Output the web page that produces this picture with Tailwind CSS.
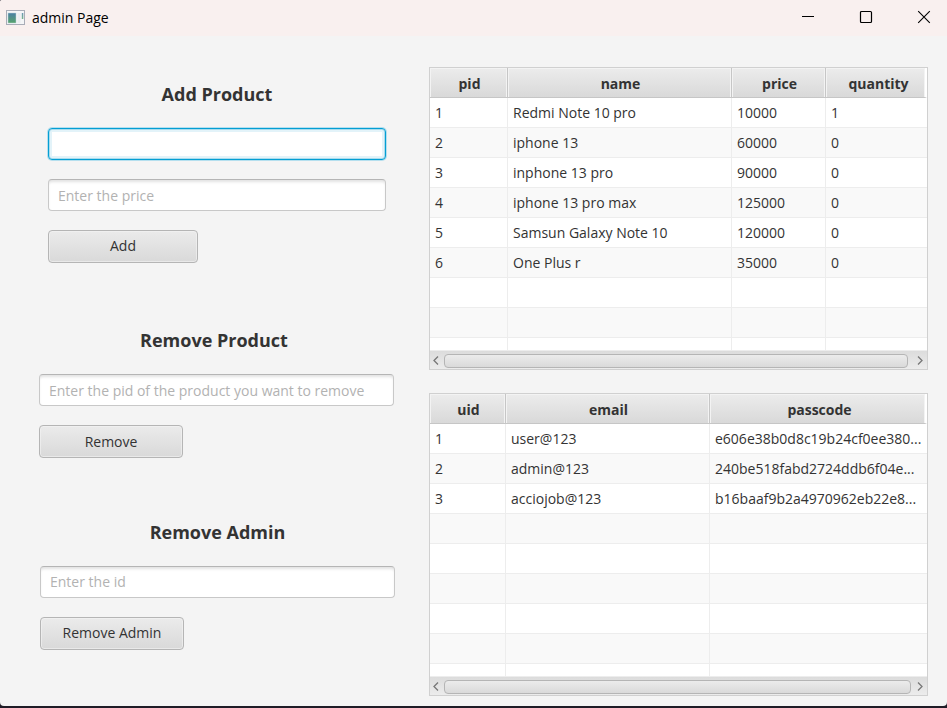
<!DOCTYPE html>
<html lang="en">
<head>
<meta charset="utf-8">
<meta name="viewport" content="width=device-width, initial-scale=1">
<title>admin Page</title>
<script src="https://cdn.jsdelivr.net/npm/@tailwindcss/browser@4"></script>
</head>
<body class="min-h-screen bg-[#1f1c26] pb-[2px] font-['Open_Sans','Noto_Sans',sans-serif] text-[14px] leading-5 text-[#333]">
<div class="flex min-h-[calc(100vh-2px)] flex-col overflow-hidden rounded-tl-[2px] rounded-b-sm bg-[#f4f4f4]">

  <header class="flex h-9 items-center bg-[#f9f0ef] pl-[6px] text-black">
    <svg class="-mt-[2px] h-[15px] w-[19px]" viewBox="0 0 19 15" aria-hidden="true">
      <defs><linearGradient id="app" x1="0" y1="0" x2="0" y2="1"><stop offset="0" stop-color="#4a7fa5"/><stop offset="1" stop-color="#57a36c"/></linearGradient></defs>
      <rect x=".5" y=".5" width="18" height="14" fill="#f4f5f7" stroke="#a9adb8"/>
      <rect x="2" y="3" width="8" height="10" fill="url(#app)" stroke="#b9d3d6" stroke-width=".5"/>
      <rect x="11.500" y="3" width="3" height="10" fill="#eaedf0"/>
      <rect x="15.800" y="3" width="1.500" height="6" fill="url(#app)" opacity=".8"/>
    </svg>
    <h1 class="ml-[7px] grow">admin Page</h1>
    <div class="-mt-[2px] flex h-full">
      <button aria-label="Minimize" class="flex w-[46px] items-center justify-center"><svg class="size-[14px]" viewBox="0 0 14 14"><path d="M1 6.500h12" stroke="#000" fill="none"/></svg></button>
      <button aria-label="Maximize" class="flex w-[70px] items-center justify-center"><svg class="size-[14px]" viewBox="0 0 14 14"><rect x="1.500" y="1.500" width="11" height="11" rx="1" stroke="#000" stroke-width="1.200" fill="none"/></svg></button>
      <button aria-label="Close" class="flex w-[46px] items-center justify-center"><svg class="size-[14px]" viewBox="0 0 14 14"><path d="M1.200 1.200l11.600 11.600M12.800 1.200L1.200 12.800" stroke="#000" stroke-width="1.100" fill="none"/></svg></button>
    </div>
  </header>

  <main class="grid grow grid-cols-[429fr_499fr] pr-[19px]">
    <div class="pt-[46px]">
      <form class="flex flex-col items-start pr-[43px] pl-12">
        <h2 class="mb-[22px] w-full text-center text-lg leading-6 font-bold">Add Product</h2>
        <input aria-label="Product name" class="mb-[19px] h-8 w-full rounded-[4px] border border-[#039ed3] bg-white px-[9px] shadow-[0_0_0_1px_#b5dfee,inset_0_0_0_1px_#a9dcee,inset_0_0_0_3px_#e3f3f9] outline-none">
        <input aria-label="Price" placeholder="Enter the price" class="mb-[19px] h-8 w-full rounded-[4px] border border-[#c8c8c8] border-t-[#b5b5b5] bg-white px-[9px] shadow-[inset_0_3px_3px_-1px_#e2e2e2] outline-none placeholder:text-[#b2b2b2]">
        <button type="button" class="h-[33px] w-[150px] rounded-[4px] border border-[#b5b5b5] bg-linear-to-b from-[#ebebeb] to-[#d9d9d9] pb-[2px] shadow-[inset_0_0_0_1px_#f3f3f399]">Add</button>
      </form>
      <form class="mt-[65px] flex flex-col items-start pr-[35px] pl-[39px]">
        <h2 class="mb-[22px] w-full pr-[5px] text-center text-lg leading-6 font-bold">Remove Product</h2>
        <input aria-label="Product pid" placeholder="Enter the pid of the product you want to remove" class="mb-[19px] h-8 w-full rounded-[4px] border border-[#c8c8c8] border-t-[#b5b5b5] bg-white px-[9px] shadow-[inset_0_3px_3px_-1px_#e2e2e2] outline-none placeholder:text-[#b2b2b2]">
        <button type="button" class="h-[33px] w-36 rounded-[4px] border border-[#b5b5b5] bg-linear-to-b from-[#ebebeb] to-[#d9d9d9] shadow-[inset_0_0_0_1px_#f3f3f399]">Remove</button>
      </form>
      <form class="mt-[62px] flex flex-col items-start pr-[34px] pl-10">
        <h2 class="mb-[22px] w-full text-center text-lg leading-6 font-bold">Remove Admin</h2>
        <input aria-label="Admin id" placeholder="Enter the id" class="mb-[19px] h-8 w-full rounded-[4px] border border-[#c8c8c8] border-t-[#b5b5b5] bg-white px-[9px] pb-[2px] shadow-[inset_0_3px_3px_-1px_#e2e2e2] outline-none placeholder:text-[#b2b2b2]">
        <button type="button" class="h-[33px] w-36 rounded-[4px] border border-[#b5b5b5] bg-linear-to-b from-[#ebebeb] to-[#d9d9d9] pb-[2px] shadow-[inset_0_0_0_1px_#f3f3f399]">Remove Admin</button>
      </form>
    </div>

    <div class="flex flex-col gap-[23px] pt-[31px] pb-[10px]">
      <section class="border border-[#d0d0d0] bg-white" aria-label="Products">
        <table class="w-full table-fixed border-separate border-spacing-0 text-left whitespace-nowrap [&_td]:border-r [&_td]:border-b [&_td]:border-[#ededed] [&_td]:px-[5px] [&_td:last-child]:border-r-0 [&_th]:border-r [&_th]:border-b [&_th]:border-[#c6c6c6] [&_th]:bg-linear-to-b [&_th]:from-[#ececec] [&_th]:to-[#d9d9d9] [&_th]:pt-[2px] [&_th]:pl-[2px] [&_th]:text-center [&_th]:font-bold [&_th]:shadow-[inset_1px_1px_0_#f3f3f3,inset_-1px_0_0_#f3f3f3] [&_th:last-child]:border-r-2 [&_th:last-child]:border-r-white [&_th:last-child]:pl-[6px]">
          <colgroup><col class="w-[78px]"><col><col class="w-[94px]"><col class="w-[101px]"></colgroup>
          <thead><tr class="h-[30px]"><th>pid</th><th>name</th><th>price</th><th>quantity</th></tr></thead>
          <tbody>
            <tr class="h-[30px]"><td>1</td><td>Redmi Note 10 pro</td><td>10000</td><td>1</td></tr>
            <tr class="h-[30px] bg-[#f9f9f9]"><td>2</td><td>iphone 13</td><td>60000</td><td>0</td></tr>
            <tr class="h-[30px]"><td>3</td><td>inphone 13 pro</td><td>90000</td><td>0</td></tr>
            <tr class="h-[30px] bg-[#f9f9f9]"><td>4</td><td>iphone 13 pro max</td><td>125000</td><td>0</td></tr>
            <tr class="h-[30px]"><td>5</td><td>Samsun Galaxy Note 10</td><td>120000</td><td>0</td></tr>
            <tr class="h-[30px] bg-[#f9f9f9]"><td>6</td><td>One Plus r</td><td>35000</td><td>0</td></tr>
            <tr class="h-[30px]"><td></td><td></td><td></td><td></td></tr>
            <tr class="h-[30px] bg-[#f9f9f9]"><td></td><td></td><td></td><td></td></tr>
            <tr class="h-[13px]"><td></td><td></td><td></td><td></td></tr>
          </tbody>
        </table>
        <div class="flex h-[18px] items-center bg-linear-to-b from-[#dcdcdc] to-[#ececec] pt-[2px]">
          <svg class="h-3 w-[14px]" viewBox="0 0 14 12" aria-hidden="true"><path d="M8 1.500L4 5.500l4 4" fill="none" stroke="#777" stroke-width="1.300"/></svg>
          <div class="h-[14px] grow rounded-[4px] border border-[#b5b5b5] bg-linear-to-b from-[#ececec] to-[#dadada]"></div>
          <svg class="ml-[5px] h-3 w-[14px]" viewBox="0 0 14 12" aria-hidden="true"><path d="M5 1.500l4 4-4 4" fill="none" stroke="#777" stroke-width="1.300"/></svg>
        </div>
      </section>

      <section class="border border-[#d0d0d0] bg-white" aria-label="Users">
        <table class="w-full table-fixed border-separate border-spacing-0 text-left whitespace-nowrap [&_td]:border-r [&_td]:border-b [&_td]:border-[#ededed] [&_td]:px-[5px] [&_td:last-child]:border-r-0 [&_th]:border-r [&_th]:border-b [&_th]:border-[#c6c6c6] [&_th]:bg-linear-to-b [&_th]:from-[#ececec] [&_th]:to-[#d9d9d9] [&_th]:pt-[2px] [&_th]:pl-[2px] [&_th]:text-center [&_th]:font-bold [&_th]:shadow-[inset_1px_1px_0_#f3f3f3,inset_-1px_0_0_#f3f3f3] [&_th:last-child]:border-r-2 [&_th:last-child]:border-r-white [&_th:last-child]:pl-[4px]">
          <colgroup><col class="w-[76px]"><col class="w-[204px]"><col></colgroup>
          <thead><tr class="h-[30px]"><th>uid</th><th>email</th><th>passcode</th></tr></thead>
          <tbody>
            <tr class="h-[30px]"><td>1</td><td>user@123</td><td>e606e38b0d8c19b24cf0ee380...</td></tr>
            <tr class="h-[30px] bg-[#f9f9f9]"><td>2</td><td>admin@123</td><td>240be518fabd2724ddb6f04e...</td></tr>
            <tr class="h-[30px]"><td>3</td><td>acciojob@123</td><td>b16baaf9b2a4970962eb22e8...</td></tr>
            <tr class="h-[30px] bg-[#f9f9f9]"><td></td><td></td><td></td></tr>
            <tr class="h-[30px]"><td></td><td></td><td></td></tr>
            <tr class="h-[30px] bg-[#f9f9f9]"><td></td><td></td><td></td></tr>
            <tr class="h-[30px]"><td></td><td></td><td></td></tr>
            <tr class="h-[30px] bg-[#f9f9f9]"><td></td><td></td><td></td></tr>
            <tr class="h-[13px]"><td></td><td></td><td></td></tr>
          </tbody>
        </table>
        <div class="flex h-[18px] items-center bg-linear-to-b from-[#dcdcdc] to-[#ececec] pt-[2px]">
          <svg class="h-3 w-[14px]" viewBox="0 0 14 12" aria-hidden="true"><path d="M8 1.500L4 5.500l4 4" fill="none" stroke="#777" stroke-width="1.300"/></svg>
          <div class="h-[14px] grow rounded-[4px] border border-[#b5b5b5] bg-linear-to-b from-[#ececec] to-[#dadada]"></div>
          <svg class="ml-[2px] h-3 w-[14px]" viewBox="0 0 14 12" aria-hidden="true"><path d="M5 1.500l4 4-4 4" fill="none" stroke="#777" stroke-width="1.300"/></svg>
        </div>
      </section>
    </div>
  </main>
</div>
</body>
</html>
